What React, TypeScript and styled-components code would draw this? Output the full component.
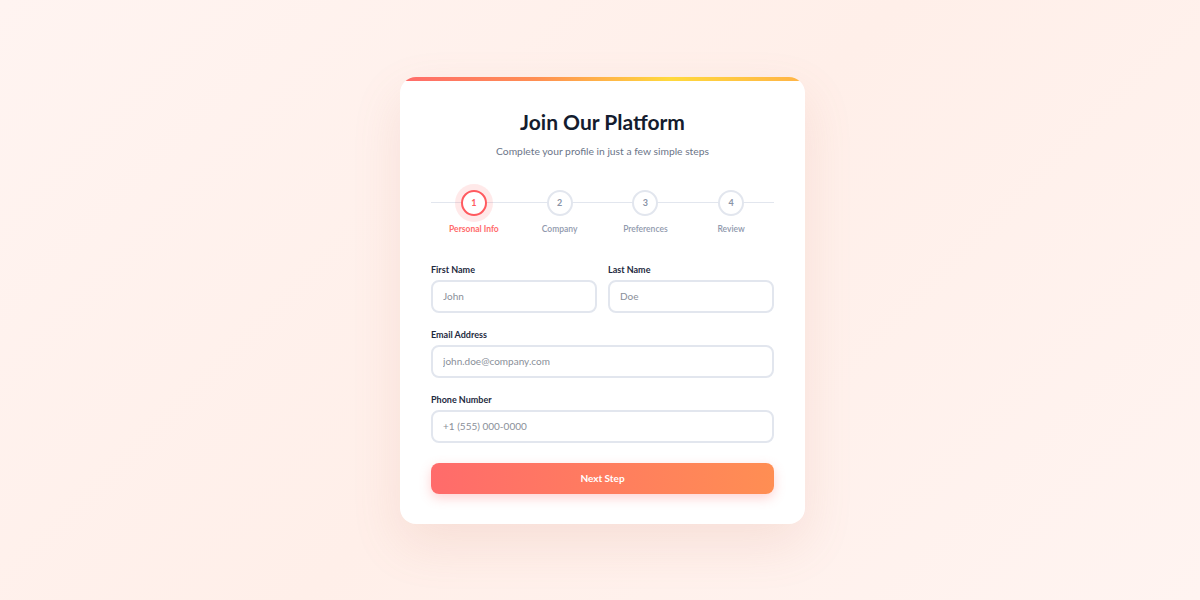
import React from "react";
import styled, { createGlobalStyle } from "styled-components";

const GlobalStyle = createGlobalStyle`
  * { box-sizing: border-box; }
  html, body { margin: 0; padding: 0; }
  body {
    font-family: Lato, "Noto Sans", sans-serif;
    background: linear-gradient(135deg, #fff4f1 0%, #ffefe9 50%, #fff4f1 100%);
  }
`;

const Page = styled.div`
  width: 1200px;
  height: 600px;
  display: flex;
  align-items: center;
  justify-content: center;
  padding-left: 5px;
`;

const Card = styled.div`
  position: relative;
  width: 405px;
  background: #ffffff;
  border-radius: 16px;
  overflow: hidden;
  padding: 32px 31px 30px;
  box-shadow: 0 20px 50px rgba(200, 120, 100, 0.14);
  &::before {
    content: "";
    position: absolute;
    top: 0;
    left: 0;
    right: 0;
    height: 4px;
    background: linear-gradient(90deg, #ff6b6b, #ff8e53, #ffd93d, #ffb347);
  }
`;

const Header = styled.div`
  text-align: center;
  margin-bottom: 31px;
`;

const Title = styled.h1`
  margin: 0;
  font-size: 21px;
  font-weight: 700;
  color: #141c2e;
  line-height: 26px;
`;

const Subtitle = styled.p`
  margin: 8px 0 0;
  font-size: 10.3px;
  color: #6b7588;
  line-height: 16px;
`;

const Steps = styled.div`
  position: relative;
  display: flex;
  margin: 0 0 30px;
  &::before {
    content: "";
    position: absolute;
    left: 0;
    right: 0;
    top: 12px;
    height: 1px;
    background: #e2e6ee;
  }
`;

const Step = styled.div`
  position: relative;
  flex: 1;
  display: flex;
  flex-direction: column;
  align-items: center;
  gap: 8px;
`;

const Circle = styled.div<{ $active?: boolean }>`
  width: 26px;
  height: 26px;
  border-radius: 50%;
  background: #ffffff;
  border: 2px solid ${(p) => (p.$active ? "#ff5a5f" : "#e2e6ee")};
  box-shadow: ${(p) => (p.$active ? "0 0 0 6px rgba(255, 107, 107, 0.15)" : "none")};
  color: ${(p) => (p.$active ? "#ff5a5f" : "#8a93a6")};
  font-size: 9px;
  font-weight: 700;
  display: flex;
  align-items: center;
  justify-content: center;
`;

const StepLabel = styled.div<{ $active?: boolean }>`
  font-size: 8.5px;
  font-weight: ${(p) => (p.$active ? 700 : 600)};
  color: ${(p) => (p.$active ? "#ff6b6b" : "#9099ad")};
  line-height: 10px;
`;

const Row = styled.div`
  display: grid;
  grid-template-columns: 1fr 1fr;
  gap: 11px;
`;

const Field = styled.div`
  display: flex;
  flex-direction: column;
  margin-bottom: 16px;
`;

const Label = styled.label`
  font-size: 9px;
  font-weight: 700;
  color: #1e2a40;
  line-height: 11px;
  margin-bottom: 5px;
`;

const Input = styled.input`
  height: 33px;
  border: 2px solid #e2e6ee;
  border-radius: 8px;
  padding: 0 10px;
  font-family: inherit;
  font-size: 10px;
  color: #1e2a40;
  outline: none;
  &::placeholder {
    color: #8a8f99;
  }
`;

const Button = styled.button`
  width: 100%;
  height: 31px;
  margin-top: 4px;
  border: none;
  border-radius: 8px;
  background: linear-gradient(90deg, #ff6b6b, #ff8e53);
  color: #ffffff;
  font-family: inherit;
  font-size: 10px;
  font-weight: 700;
  box-shadow: 0 4px 12px rgba(255, 107, 107, 0.3);
  cursor: pointer;
`;

const steps = ["Personal Info", "Company", "Preferences", "Review"];

export default function App() {
  return (
    <>
      <GlobalStyle />
      <Page>
        <Card>
          <Header>
            <Title>Join Our Platform</Title>
            <Subtitle>Complete your profile in just a few simple steps</Subtitle>
          </Header>
          <Steps>
            {steps.map((s, i) => (
              <Step key={s}>
                <Circle $active={i === 0}>{i + 1}</Circle>
                <StepLabel $active={i === 0}>{s}</StepLabel>
              </Step>
            ))}
          </Steps>
          <Row>
            <Field>
              <Label>First Name</Label>
              <Input placeholder="John" />
            </Field>
            <Field>
              <Label>Last Name</Label>
              <Input placeholder="Doe" />
            </Field>
          </Row>
          <Field>
            <Label>Email Address</Label>
            <Input placeholder="john.doe@company.com" />
          </Field>
          <Field>
            <Label>Phone Number</Label>
            <Input placeholder="+1 (555) 000-0000" />
          </Field>
          <Button>Next Step</Button>
        </Card>
      </Page>
    </>
  );
}
